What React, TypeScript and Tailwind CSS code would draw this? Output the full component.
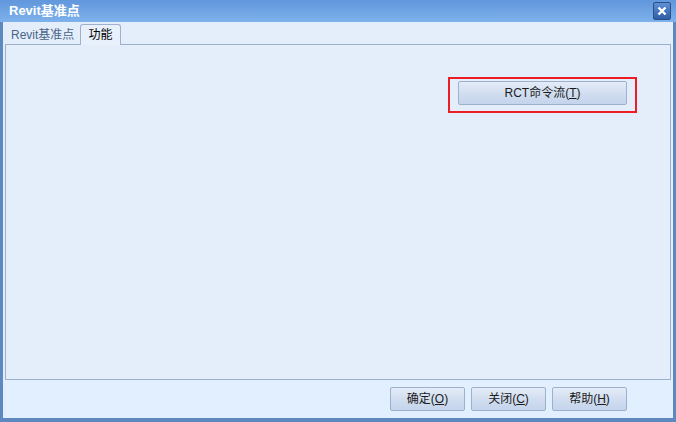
const font = { fontFamily: '"Liberation Sans", "Noto Sans CJK SC", sans-serif' };

function WinButton({ label, hot, className = "" }: { label: string; hot: string; className?: string }) {
  return (
    <button
      className={
        "h-[24px] rounded-[2px] border border-[#9eb1cc] bg-gradient-to-b from-[#e4ecf7] via-[#d2def0] to-[#c4d4ec] text-[12px] text-[#1b1b1b] flex items-center justify-center " +
        className
      }
    >
      {label}(<span className="underline">{hot}</span>)
    </button>
  );
}

export default function App() {
  return (
    <div className="w-[676px] h-[422px] bg-[#5d89c0] p-[3px] pt-0 flex flex-col" style={font}>
      {/* title bar */}
      <div className="h-[22px] -mx-[3px] px-[9px] bg-gradient-to-b from-[#6197dc] to-[#7db2ec] flex items-center justify-between">
        <span className="text-white font-bold text-[13px]">Revit基准点</span>
        <div className="w-[18px] h-[18px] rounded-[2px] border border-[#2c4f88] bg-gradient-to-b from-[#5f8fd4] to-[#2f5ea8] flex items-center justify-center mr-[-4px]">
          <svg width="10" height="10" viewBox="0 0 10 10">
            <path d="M1.5 1.5 L8.5 8.5 M8.5 1.5 L1.5 8.5" stroke="white" strokeWidth="2.4" />
          </svg>
        </div>
      </div>

      <div className="flex-1 bg-[#e4eefb] flex flex-col px-[2px]">
        {/* tabs */}
        <div className="h-[23px] flex items-end pl-[3px] border-b border-[#9db0cc]">
          <div className="h-[19px] w-[72px] pl-[3px] whitespace-nowrap flex items-center text-[12px] text-[#4a6487]">
            Revit基准点
          </div>
          <div className="h-[21px] w-[41px] -mb-px flex items-center justify-center text-[12px] text-black bg-[#e8f0fb] border border-b-0 border-[#9db0cc] rounded-t-[3px]">
            功能
          </div>
        </div>
        {/* panel */}
        <div className="flex-1 border-x border-b border-[#9db0cc] bg-[#e4eefb] flex justify-end items-start pt-[32px] pr-[33px]">
          <div className="border-2 border-[#ee1c25] px-[8px] pt-[2px] pb-[6px]">
            <WinButton label="RCT命令流" hot="T" className="w-[169px]" />
          </div>
        </div>
        {/* bottom buttons */}
        <div className="h-[38px] flex items-center justify-end gap-[6px] pr-[44px] bg-[#e2effe]">
          <WinButton label="确定" hot="O" className="w-[75px]" />
          <WinButton label="关闭" hot="C" className="w-[75px]" />
          <WinButton label="帮助" hot="H" className="w-[75px]" />
        </div>
      </div>
      <div className="h-[1px]" />
    </div>
  );
}
